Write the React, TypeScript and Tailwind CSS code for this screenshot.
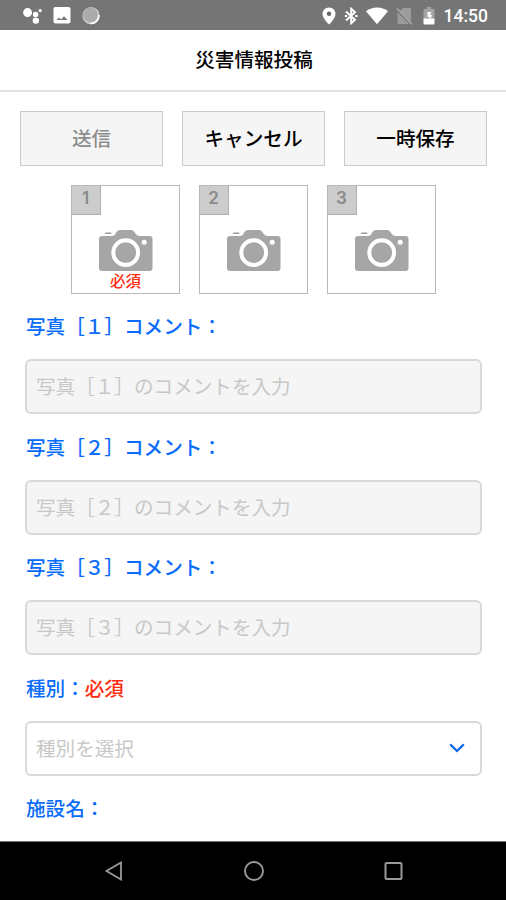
import { clsx } from "clsx";

interface Photo {
  id: number;
  digit: string;
  required?: boolean;
}

const photos: Photo[] = [
  { id: 1, digit: "１", required: true },
  { id: 2, digit: "２" },
  { id: 3, digit: "３" },
];

const actions = [
  { label: "送信", disabled: true },
  { label: "キャンセル" },
  { label: "一時保存" },
];

const StatusBar = () => (
  <div className="flex h-[30px] shrink-0 items-center justify-between bg-[#757575] pt-px pr-[18px] pl-[23px]">
    <div className="flex items-center gap-[11px]">
      <svg className="h-[18px] w-[19px]" viewBox="0 0 19 18" fill="#fff">
        <circle cx="4.6" cy="5.6" r="4.5" />
        <circle cx="12.6" cy="7.4" r="2.7" />
        <circle cx="12.8" cy="13.6" r="3.2" />
        <circle cx="17.2" cy="3.6" r="1.6" />
      </svg>
      <svg className="h-[17px] w-[18px]" viewBox="0 0 18 17">
        <rect x="0.5" width="17" height="16.5" rx="2" fill="#fff" />
        <path d="M3.5 13 6 10.4l2 2 3-3.2 3.5 3.800z" fill="#757575" />
      </svg>
      <svg className="h-[18px] w-[18px]" viewBox="0 0 18 18">
        <circle cx="9" cy="8.700" r="8.6" fill="#cfcfcf" />
        <circle cx="8.4" cy="8" r="7.4" fill="#ababab" />
        <path
          d="M17 8A8.300 8.300 0 0 1 8.500 16.600"
          fill="none"
          stroke="#fff"
          strokeWidth="1.5"
        />
      </svg>
    </div>
    <div className="flex items-center">
      <svg className="h-[18px] w-[14px]" viewBox="0 0 14 18">
        <path
          d="M7 .5C3.4.5.5 3.300.5 6.900.5 11.400 7 17.500 7 17.500s6.500-6.100 6.500-10.600C13.500 3.300 10.600.5 7 .5z"
          fill="#fff"
        />
        <circle cx="7" cy="6.800" r="2.2" fill="#666" />
      </svg>
      <svg
        className="ml-[8px] h-[18px] w-[14px]"
        viewBox="0 0 14 18"
        fill="none"
        stroke="#fff"
        strokeWidth="2"
      >
        <path d="M2 4.500 11 12.700 7.200 16.200V1.800L11 5.300 2 13.500" />
        <path d="M.8 9h2.400M11.200 9h2.400" />
      </svg>
      <svg className="ml-[8px] h-[18px] w-[22px]" viewBox="0 0 22 18">
        <path d="M0 4.200C6.500-.800 15.500-.800 22 4.200L11 17.300z" fill="#fff" />
      </svg>
      <svg className="ml-[8px] h-[18px] w-[17px]" viewBox="0 0 17 18">
        <path d="M15 1v15L3.500 4.400 7 1zM1.500 5V17h11.700z" fill="#9b9b9b" />
        <path d="M.8 1.200 16 17.200" stroke="#a8a8a8" strokeWidth="1.600" />
      </svg>
      <svg className="ml-[10px] h-[18px] w-[12px]" viewBox="0 0 12 18">
        <path d="M3.800 0h4.400v2H10.500q1 0 1 1v9H.5V3q0-1 1-1H3.800z" fill="#a3a3a3" />
        <path d="M.5 11.500h11V16.500q0 1-1 1h-9q-1 0-1-1z" fill="#fff" />
        <path d="M8.500 5H4.500v5h2v3.500L9.200 8H7z" fill="#fff" />
      </svg>
      <span className="ml-[9px] pt-[2px] font-[Roboto] text-[17.5px] leading-none font-medium text-white">
        14:50
      </span>
    </div>
  </div>
);

const CameraIcon = () => (
  <svg className="h-[41px] w-[54px] shrink-0" viewBox="0 0 54 41">
    <path
      d="M3 6H13Q15.500 6 16.500 3.800L17.500 2Q18.800 0 21 0H32Q34.200 0 35.500 2L36.500 3.800Q38 6 40.500 6H50.500Q53.500 6 53.500 9V38Q53.500 41 50.500 41H3Q0 41 0 38V9Q0 6 3 6z"
      fill="#a6a6a6"
    />
    <rect x="6" y="2.400" width="6.500" height="1.500" rx=".7" fill="#999" />
    <circle cx="26.700" cy="22.600" r="12.400" fill="none" stroke="#fff" strokeWidth="4" />
    <circle cx="45.200" cy="12.300" r="2.500" fill="#fff" />
  </svg>
);

const PhotoSlot = ({ id, required }: Photo) => (
  <button className="flex h-[109px] w-[109px] flex-col items-start border border-[#b8b8b8] bg-white">
    <span className="flex h-[29px] w-[29px] items-center justify-center border-r border-b border-[#b0b0b0] bg-[#ccc] pb-[3px] font-[Inter] text-[17px] leading-none font-semibold text-[#8a8a8a]">
      {id}
    </span>
    <span className="mt-[15px] flex w-full flex-col items-center pl-px">
      <CameraIcon />
      {required && (
        <span className="mt-[2px] text-[15.5px] leading-[15px] font-medium text-[#ff2d12]">
          必須
        </span>
      )}
    </span>
  </button>
);

const FieldLabel = ({ text, required }: { text: string; required?: boolean }) => (
  <div className="flex h-[65.5px] items-center pl-px text-[19.6px] leading-none font-medium text-[#0a6cfa]">
    {text}
    {required && <span className="text-[#ff2d12]">必須</span>}
  </div>
);

const FieldBox = ({
  placeholder,
  select,
}: {
  placeholder: string;
  select?: boolean;
}) => (
  <div
    className={clsx(
      "flex h-[55px] items-center justify-between rounded-[6px] border-2 border-[#d9d9d9] pr-[15px] pb-px pl-[9px] text-[19.6px] leading-none text-[#c8c8c8]",
      select ? "bg-white" : "bg-[#f5f5f5]",
    )}
  >
    {placeholder}
    {select && (
      <svg
        className="h-[10px] w-[16px]"
        viewBox="0 0 16 10"
        fill="none"
        stroke="#1268e8"
        strokeWidth="2.300"
      >
        <path d="M1.200 1.400 8 8 14.800 1.400" />
      </svg>
    )}
  </div>
);

const NavBar = () => (
  <div className="flex h-[59px] shrink-0 items-center justify-between border-t border-[#777] bg-black pr-[103px] pl-[104px]">
    <svg
      className="h-[20px] w-[20px]"
      viewBox="0 0 20 20"
      fill="none"
      stroke="#999"
      strokeWidth="1.800"
    >
      <path d="M17 1.500V18.500L2.500 10z" />
    </svg>
    <svg
      className="h-[20px] w-[20px]"
      viewBox="0 0 20 20"
      fill="none"
      stroke="#999"
      strokeWidth="1.900"
    >
      <circle cx="10" cy="10" r="9" />
    </svg>
    <svg
      className="h-[20px] w-[20px]"
      viewBox="0 0 20 20"
      fill="none"
      stroke="#999"
      strokeWidth="2"
    >
      <rect x="2.500" y="2" width="16" height="16" rx="1" />
    </svg>
  </div>
);

export default function App() {
  return (
    <div className="flex h-[900px] w-[506px] flex-col overflow-hidden bg-white font-['Noto_Sans_CJK_JP',sans-serif]">
      <StatusBar />
      <header className="flex h-[62px] shrink-0 items-center justify-center border-b-2 border-[#e2e2e2] pb-[2px] pl-[2px] text-[19.6px] leading-none font-medium text-black">
        災害情報投稿
      </header>

      <main className="min-h-0 flex-1 overflow-hidden pt-[19px]">
        <div className="flex justify-between pr-[19px] pl-[20px]">
          {actions.map(({ label, disabled }) => (
            <button
              key={label}
              disabled={disabled}
              className={clsx(
                "h-[55px] w-[143px] border border-[#cacaca] bg-[#f5f5f5] pb-[2px] text-[19.6px] leading-none font-medium",
                disabled ? "text-[#8c8c8c]" : "text-black",
              )}
            >
              {label}
            </button>
          ))}
        </div>

        <div className="mt-[19px] flex justify-center gap-[19px]">
          {photos.map((photo) => (
            <PhotoSlot key={photo.id} {...photo} />
          ))}
        </div>

        <div className="-mt-[0.5px] pr-[24px] pl-[25px]">
          {photos.map(({ id, digit }) => (
            <div key={id}>
              <FieldLabel text={`写真［${digit}］コメント：`} />
              <FieldBox placeholder={`写真［${digit}］のコメントを入力`} />
            </div>
          ))}
          <FieldLabel text="種別：" required />
          <FieldBox placeholder="種別を選択" select />
          <FieldLabel text="施設名：" />
        </div>
      </main>

      <NavBar />
    </div>
  );
}
